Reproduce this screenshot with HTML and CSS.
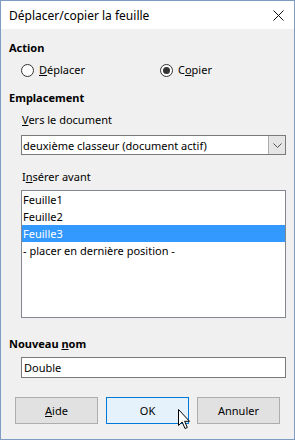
FILE: index.html
```html
<!DOCTYPE html>
<html>
    <head>
        <title>Déplacer/copier la feuille</title>
        <link rel="stylesheet" href="styles.css">
    </head>
    <body>
        <div class="dialog">
            <div class="titlebar">
                <span>Déplacer/copier la feuille</span>
                <svg class="close" width="11" height="11" viewBox="0 0 11 11">
                    <path d="M0.5 0.5 L10.5 10.5 M10.5 0.5 L0.5 10.5" stroke="#111" stroke-width="1"/>
                </svg>
            </div>

            <div class="content">
                <div class="heading">Action</div>
                <div class="radios">
                    <label class="radio"><span class="dot"></span><span><u>D</u>éplacer</span></label>
                    <label class="radio checked"><span class="dot"></span><span>C<u>o</u>pier</span></label>
                </div>

                <div class="heading gap-12">Emplacement</div>
                <div class="label gap-6"><u>V</u>ers le document</div>
                <div class="combo">
                    <span class="combo-text">deuxième classeur (document actif)</span>
                    <span class="combo-btn">
                        <svg width="9" height="5" viewBox="0 0 9 5"><path d="M0.5 0.5 L4.5 4.5 L8.5 0.5" fill="none" stroke="#555" stroke-width="1"/></svg>
                    </span>
                </div>

                <div class="label gap-14">I<u>n</u>sérer avant</div>
                <div class="listbox">
                    <div class="item">Feuille1</div>
                    <div class="item">Feuille2</div>
                    <div class="item selected">Feuille3</div>
                    <div class="item">- placer en dernière position -</div>
                </div>

                <div class="heading gap-18">Nouveau <u>n</u>om</div>
                <div class="textbox">Double</div>

                <div class="buttons">
                    <div class="btn"><u>A</u>ide</div>
                    <div class="btn btn-default">OK</div>
                    <div class="btn">Annuler</div>
                </div>
            </div>

            <!-- mouse pointer over the OK button -->
            <svg class="pointer" width="13" height="21" viewBox="0 0 13 21">
                <path d="M0.5 0.5 L0.5 16.5 L4.2 13 L7 19.5 L9.3 18.5 L6.6 12.3 L11.5 12.3 Z" fill="#fff" stroke="#000" stroke-width="1" stroke-linejoin="miter"/>
            </svg>
        </div>
    </body>
</html>
```

FILE: styles.css
```css
* {box-sizing: border-box}

body {
  margin: 0;
  font-family: "Noto Sans", sans-serif;
  font-size: 11px;
  color: #000;
}

.dialog {
  position: relative;
  width: 295px;
  height: 440px;
  border: 1px solid #7c9cc4;
  background: #f0f0f0;
}

/* Title bar */
.titlebar {
  height: 28px;
  background: #fff;
  padding: 0 10px 0 8px;
  display: flex;
  align-items: center;
  justify-content: space-between;
  font-size: 12px;
}

.content {
  padding: 11px 8px 0 8px;
}

.heading {
  font-weight: bold;
  line-height: 16px;
}

.label {
  line-height: 16px;
  padding-left: 13px;
}

.gap-6 { margin-top: 6px; }
.gap-12 { margin-top: 12px; }
.gap-14 { margin-top: 14px; }
.gap-18 { margin-top: 18px; }

/* Radio buttons */
.radios {
  margin-top: 6px;
  padding-left: 12px;
  display: grid;
  grid-template-columns: 139px 1fr;
  line-height: 16px;
}

.radio {
  display: flex;
  align-items: center;
  gap: 5px;
}

.dot {
  width: 13px;
  height: 13px;
  border-radius: 50%;
  border: 1px solid #333;
  background: #fff;
  display: flex;
  align-items: center;
  justify-content: center;
}

.radio.checked .dot::after {
  content: "";
  width: 7px;
  height: 7px;
  border-radius: 50%;
  background: #333;
}

/* Combo box */
.combo {
  margin: 7px 0 0 12px;
  height: 20px;
  width: 265px;
  border: 1px solid #7a7a7a;
  background: #fff;
  display: flex;
  align-items: center;
}

.combo-text {
  flex: 1;
  padding-left: 1px;
}

.combo-btn {
  width: 17px;
  height: 100%;
  border-left: 1px solid #adadad;
  background: #e5e5e5;
  display: flex;
  align-items: center;
  justify-content: center;
}

/* List box */
.listbox {
  margin: 5px 0 0 12px;
  width: 265px;
  height: 128px;
  border: 1px solid #828790;
  background: #fff;
  padding-top: 0;
}

.item {
  height: 17px;
  line-height: 17px;
  padding-left: 1px;
}

.item.selected {
  background: #3399ff;
  color: #fff;
}

.textbox {
  margin: 5px 0 0 12px;
  width: 265px;
  height: 21px;
  line-height: 19px;
  border: 1px solid #7a7a7a;
  background: #fff;
  padding-left: 2px;
}

/* Buttons */
.buttons {
  margin: 19px 0 0 6px;
  display: flex;
  gap: 8px;
}

.btn {
  width: 83px;
  height: 27px;
  border: 1px solid #adadad;
  background: #e1e1e1;
  display: flex;
  align-items: center;
  justify-content: center;
}

.btn-default {
  border-color: #0078d7;
  background: #e5f1fb;
}

.pointer {
  position: absolute;
  left: 177px;
  top: 408px;
}
```
